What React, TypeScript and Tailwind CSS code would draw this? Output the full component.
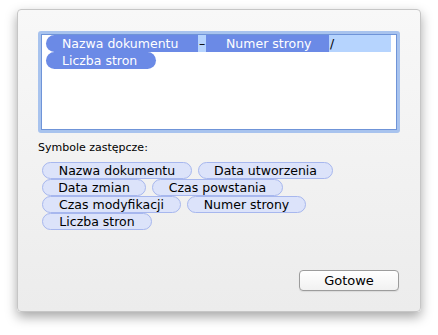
import React from 'react';

const font = { fontFamily: '"DejaVu Sans", "Liberation Sans", sans-serif' };

const chipRows: { label: string; w: string }[][] = [
  [
    { label: 'Nazwa dokumentu', w: 'w-[150px]' },
    { label: 'Data utworzenia', w: 'w-[135px]' },
  ],
  [
    { label: 'Data zmian', w: 'w-[104px]' },
    { label: 'Czas powstania', w: 'w-[131px]' },
  ],
  [
    { label: 'Czas modyfikacji', w: 'w-[139px]' },
    { label: 'Numer strony', w: 'w-[119px]' },
  ],
  [{ label: 'Liczba stron', w: 'w-[110px]' }],
];

const App: React.FC = () => {
  return (
    <div className="w-[438px] h-[335px] bg-white overflow-hidden" style={font}>
      <div className="ml-[17px] mt-[9px] w-[404px] h-[303px] rounded-[4px] border border-[#c6c6c6] bg-gradient-to-b from-[#f8f8f8] to-[#ececec] shadow-[0_5px_12px_rgba(0,0,0,0.35)] pt-[21px] pl-[20px] flex flex-col">
        {/* token field */}
        <div className="w-[362px] h-[102px] rounded-[3px] bg-[#a8c3ee] p-[3px]">
          <div className="h-full border border-[#6f94d8] bg-white pl-[4px] pr-[4px] text-[12.5px] leading-[17px]">
            <div className="flex h-[17px]">
              <span className="w-[152px] h-[17px] bg-[#6b8ae6] text-white rounded-l-full pl-[16px]">Nazwa dokumentu</span>
              <span className="w-[8px] h-[17px] bg-[#b6d4fe] text-black text-center">–</span>
              <span className="w-[123px] h-[17px] bg-[#6b8ae6] text-white pl-[20px]">Numer strony</span>
              <span className="flex-1 h-[17px] bg-[#b6d4fe] text-black pl-[1px] mr-[1px]">/</span>
            </div>
            <div className="flex h-[17px]">
              <span className="w-[110px] h-[17px] bg-[#6b8ae6] text-white rounded-full pl-[16px]">Liczba stron</span>
            </div>
          </div>
        </div>

        <div className="mt-[8px] text-[11px] leading-[14px] text-black">Symbole zastępcze:</div>

        <div className="mt-[7px] pl-[4px] flex flex-col">
          {chipRows.map((row, i) => (
            <div key={i} className="flex gap-[6px] h-[17px]">
              {row.map((c) => (
                <span
                  key={c.label}
                  className={`${c.w} h-[17px] rounded-full border border-[#a7b7ee] bg-[#dce3fa] text-black text-[12.5px] leading-[15px] text-center`}
                >
                  {c.label}
                </span>
              ))}
            </div>
          ))}
        </div>

        <div className="flex-1" />
        <div className="flex justify-end pr-[21px] pb-[20px]">
          <button className="w-[100px] h-[21px] rounded-[4px] border border-[#9c9c9c] bg-gradient-to-b from-white to-[#f1f1f1] text-black text-[13px] leading-[19px] shadow-[0_1px_1px_rgba(0,0,0,0.08)]">
            Gotowe
          </button>
        </div>
      </div>
    </div>
  );
};

export default App;
